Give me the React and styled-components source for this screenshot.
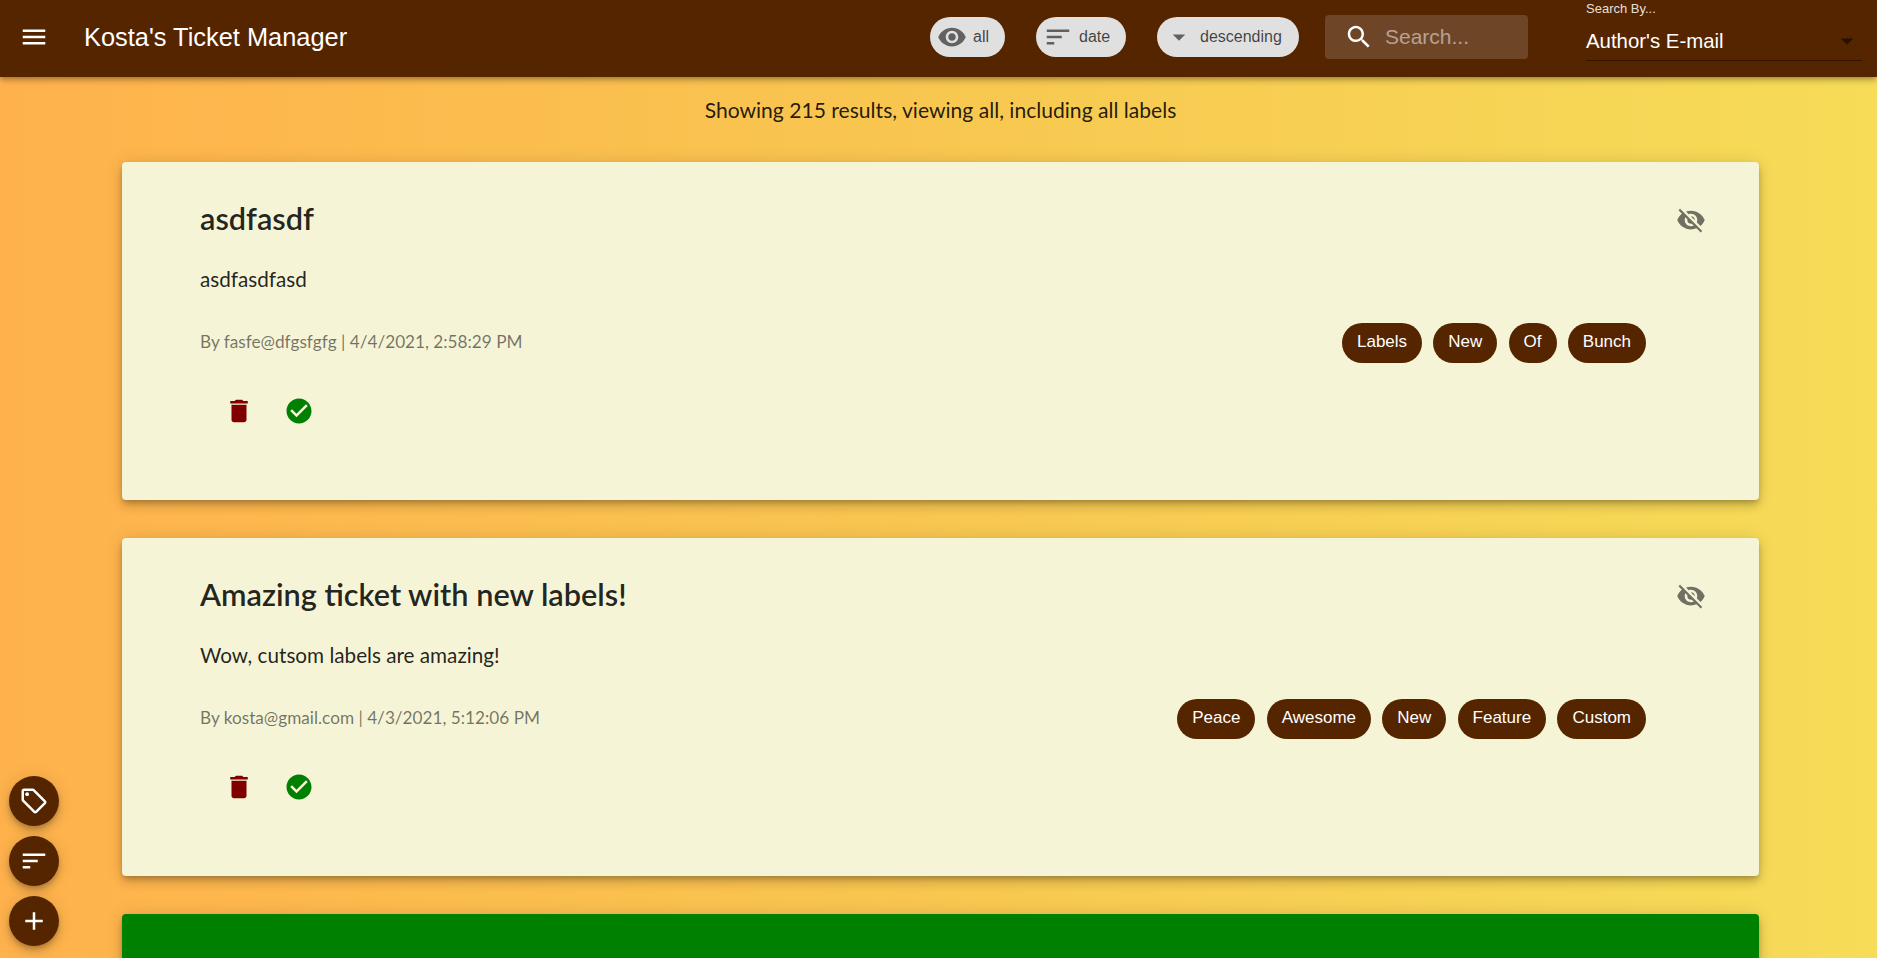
import React from "react";
import styled, { createGlobalStyle } from "styled-components";

const paths = {
  menu: "M3 18h18v-2H3v2zm0-5h18v-2H3v2zm0-7v2h18V6H3z",
  eye: "M12 4.5C7 4.5 2.73 7.61 1 12c1.73 4.39 6 7.5 11 7.5s9.27-3.11 11-7.5c-1.73-4.39-6-7.5-11-7.5zM12 17c-2.76 0-5-2.24-5-5s2.24-5 5-5 5 2.24 5 5-2.24 5-5 5zm0-8c-1.66 0-3 1.34-3 3s1.34 3 3 3 3-1.34 3-3-1.34-3-3-3z",
  sort: "M3 18h6v-2H3v2zM3 6v2h18V6H3zm0 7h12v-2H3v2z",
  drop: "M7 10l5 5 5-5z",
  search: "M15.5 14h-.79l-.28-.27C15.41 12.59 16 11.11 16 9.5 16 5.91 13.09 3 9.5 3S3 5.91 3 9.5 5.91 16 9.5 16c1.61 0 3.09-.59 4.23-1.57l.27.28v.79l5 4.99L20.49 19l-4.99-5zm-6 0C7.01 14 5 11.99 5 9.5S7.01 5 9.5 5 14 7.01 14 9.5 11.99 14 9.5 14z",
  eyeOff: "M12 7c2.76 0 5 2.24 5 5 0 .65-.13 1.26-.36 1.83l2.92 2.92c1.51-1.26 2.7-2.89 3.43-4.75-1.73-4.39-6-7.5-11-7.5-1.4 0-2.74.25-3.98.7l2.16 2.16C10.74 7.13 11.35 7 12 7zM2 4.27l2.28 2.28.46.46C3.08 8.3 1.78 10.02 1 12c1.73 4.39 6 7.5 11 7.5 1.55 0 3.03-.3 4.38-.84l.42.42L19.73 22 21 20.73 3.27 3 2 4.27zM7.53 9.8l1.55 1.55c-.05.21-.08.43-.08.65 0 1.66 1.34 3 3 3 .22 0 .44-.03.65-.08l1.55 1.55c-.67.33-1.41.53-2.2.53-2.76 0-5-2.24-5-5 0-.79.2-1.53.53-2.2zm4.31-.78l3.15 3.15.02-.16c0-1.66-1.34-3-3-3l-.17.01z",
  trash: "M6 19c0 1.1.9 2 2 2h8c1.1 0 2-.9 2-2V7H6v12zM19 4h-3.5l-1-1h-5l-1 1H5v2h14V4z",
  check: "M12 2C6.48 2 2 6.48 2 12s4.48 10 10 10 10-4.48 10-10S17.52 2 12 2zm-2 15l-5-5 1.41-1.41L10 14.17l7.59-7.59L19 8l-9 9z",
  tag: "M21.41 11.58l-9-9C12.05 2.22 11.55 2 11 2H4c-1.1 0-2 .9-2 2v7c0 .55.22 1.05.59 1.42l9 9c.36.36.86.58 1.41.58s1.05-.22 1.41-.59l7-7c.37-.36.59-.86.59-1.41s-.23-1.06-.59-1.42zM13 20.01L4 11V4h7v-.01l9 9-7 7.02z",
  add: "M19 13h-6v6h-2v-6H5v-2h6V5h2v6h6v2z",
};

const Svg = styled.svg`
  display: block;
  flex: none;
  width: ${(p) => p.$size}px;
  height: ${(p) => p.$size}px;
  fill: ${(p) => p.$color};
`;

const Icon = ({ name, size = 24, color = "currentColor", children }) => (
  <Svg viewBox="0 0 24 24" $size={size} $color={color}>
    <path d={paths[name]} />
    {children}
  </Svg>
);

const Global = createGlobalStyle`
  html, body { margin: 0; padding: 0; height: 958px; overflow: hidden; }
  body { font-family: "Liberation Sans", Arial, sans-serif; }
  * { box-sizing: border-box; }
`;

const Page = styled.div`
  height: 958px;
  overflow: hidden;
  background: linear-gradient(90deg, #ffb24c 0%, #f8c750 50%, #f6dc58 100%);
`;

const AppBar = styled.header`
  position: relative;
  z-index: 2;
  height: 77px;
  display: flex;
  align-items: center;
  padding: 0 15px 3px 19px;
  background: #552500;
  color: #fff;
  box-shadow: 0 2px 4px -1px rgba(0, 0, 0, 0.2), 0 4px 5px rgba(0, 0, 0, 0.14), 0 1px 10px rgba(0, 0, 0, 0.12);
`;

const Title = styled.h1`
  margin: 0 0 0 35px;
  flex: 1;
  font-size: 25.4px;
  font-weight: 400;
  line-height: 32px;
`;

const FilterChip = styled.div`
  display: flex;
  align-items: center;
  height: 40px;
  width: ${(p) => p.$w}px;
  margin-right: ${(p) => p.$mr}px;
  padding-left: 7px;
  gap: 6px;
  border-radius: 20px;
  background: #e0e0e0;
  color: rgba(0, 0, 0, 0.72);
  font-size: 16px;
`;

const SearchBox = styled.div`
  display: flex;
  align-items: center;
  width: 203px;
  height: 44px;
  margin-right: 58px;
  padding-left: 19px;
  gap: 11px;
  border-radius: 4px;
  background: rgba(255, 255, 255, 0.15);
  color: rgba(255, 255, 255, 0.5);
  font-size: 21px;
`;

const SearchIcon = styled.span`
  color: #fff;
`;

const SelectField = styled.div`
  width: 276px;
  height: 61px;
  margin-top: -13px;
  display: flex;
  flex-direction: column;
  border-bottom: 1px solid rgba(0, 0, 0, 0.42);
`;

const SelectLabel = styled.div`
  font-size: 13px;
  line-height: 18px;
  color: rgba(255, 255, 255, 0.87);
`;

const SelectValue = styled.div`
  display: flex;
  align-items: center;
  justify-content: space-between;
  margin-top: 8px;
  height: 30px;
  font-size: 20.4px;
  color: #fff;
`;

const Main = styled.main`
  padding: 0 118px 0 122px;
`;

const Summary = styled.p`
  margin: 0;
  height: 85px;
  padding-top: 21px;
  text-align: center;
  font-family: Lato, "Noto Sans", sans-serif;
  font-size: 21.1px;
  line-height: 24px;
  color: rgba(0, 0, 0, 0.87);
`;

const Card = styled.article`
  display: flex;
  flex-direction: column;
  height: 338px;
  margin-bottom: 38px;
  padding: 35px 53px 0 78px;
  border-radius: 4px;
  background: ${(p) => p.$bg || "#f5f4d6"};
  font-family: Lato, "Noto Sans", sans-serif;
  box-shadow: 0 3px 5px -1px rgba(0, 0, 0, 0.2), 0 6px 10px rgba(0, 0, 0, 0.14), 0 1px 18px rgba(0, 0, 0, 0.12);
`;

const CardHead = styled.div`
  display: flex;
  align-items: center;
  justify-content: space-between;
  height: 46px;
`;

const CardTitle = styled.h2`
  margin: -3px 0 0;
  font-size: 30.7px;
  font-weight: 600;
  line-height: 46px;
  color: rgba(0, 0, 0, 0.87);
`;

const CardBody = styled.p`
  margin: 22px 0 0;
  font-size: 20.7px;
  line-height: 28px;
  color: rgba(0, 0, 0, 0.87);
`;

const MetaRow = styled.div`
  display: flex;
  align-items: center;
  justify-content: space-between;
  height: 40px;
  margin-top: 30px;
  padding-right: 60px;
`;

const Meta = styled.span`
  margin-top: -3px;
  font-size: 17.2px;
  color: rgba(0, 0, 0, 0.54);
`;

const Labels = styled.div`
  display: flex;
  gap: 11.25px;
`;

const Label = styled.span`
  display: flex;
  align-items: center;
  height: 40px;
  padding: 0 15px 2px;
  border-radius: 20px;
  background: #552500;
  color: #fff;
  font-family: "Liberation Sans", Arial, sans-serif;
  font-size: 17px;
`;

const Actions = styled.div`
  display: flex;
  gap: 30px;
  margin-top: 33px;
  padding-left: 24px;
`;

const Fabs = styled.div`
  position: fixed;
  left: 9px;
  bottom: 12px;
  z-index: 3;
  display: flex;
  flex-direction: column;
  gap: 10px;
`;

const Fab = styled.button`
  display: flex;
  align-items: center;
  justify-content: center;
  width: 50px;
  height: 50px;
  padding: 0;
  border: 0;
  border-radius: 50%;
  background: #552500;
  color: #fff;
  box-shadow: 0 3px 5px -1px rgba(0, 0, 0, 0.2), 0 6px 10px rgba(0, 0, 0, 0.14), 0 1px 18px rgba(0, 0, 0, 0.12);
`;

const tickets = [
  {
    title: "asdfasdf",
    body: "asdfasdfasd",
    meta: "By fasfe@dfgsfgfg | 4/4/2021, 2:58:29 PM",
    labels: ["Labels", "New", "Of", "Bunch"],
  },
  {
    title: "Amazing ticket with new labels!",
    body: "Wow, cutsom labels are amazing!",
    meta: "By kosta@gmail.com | 4/3/2021, 5:12:06 PM",
    labels: ["Peace", "Awesome", "New", "Feature", "Custom"],
  },
];

export default function App() {
  return (
    <Page>
      <Global />
      <AppBar>
        <Icon name="menu" size={30} />
        <Title>Kosta's Ticket Manager</Title>
        <FilterChip $w={75} $mr={31}>
          <Icon name="eye" size={30} color="#616161" />
          all
        </FilterChip>
        <FilterChip $w={90} $mr={31}>
          <Icon name="sort" size={30} color="#616161" />
          date
        </FilterChip>
        <FilterChip $w={142} $mr={26}>
          <Icon name="drop" size={30} color="#616161" />
          descending
        </FilterChip>
        <SearchBox>
          <SearchIcon>
            <Icon name="search" size={30} />
          </SearchIcon>
          Search...
        </SearchBox>
        <SelectField>
          <SelectLabel>Search By...</SelectLabel>
          <SelectValue>
            Author's E-mail
            <Icon name="drop" size={30} color="rgba(0,0,0,0.54)" />
          </SelectValue>
        </SelectField>
      </AppBar>
      <Main>
        <Summary>Showing 215 results, viewing all, including all labels</Summary>
        {tickets.map((t) => (
          <Card key={t.title}>
            <CardHead>
              <CardTitle>{t.title}</CardTitle>
              <Icon name="eyeOff" size={30} color="rgba(0,0,0,0.54)" />
            </CardHead>
            <CardBody>{t.body}</CardBody>
            <MetaRow>
              <Meta>{t.meta}</Meta>
              <Labels>
                {t.labels.map((l) => (
                  <Label key={l}>{l}</Label>
                ))}
              </Labels>
            </MetaRow>
            <Actions>
              <Icon name="trash" size={30} color="#800000" />
              <Icon name="check" size={30} color="#008000" />
            </Actions>
          </Card>
        ))}
        <Card $bg="#008000" />
      </Main>
      <Fabs>
        <Fab>
          <Icon name="tag" size={30}>
            <circle cx="6.5" cy="6.5" r="1.5" />
          </Icon>
        </Fab>
        <Fab>
          <Icon name="sort" size={30} />
        </Fab>
        <Fab>
          <Icon name="add" size={30} />
        </Fab>
      </Fabs>
    </Page>
  );
}
